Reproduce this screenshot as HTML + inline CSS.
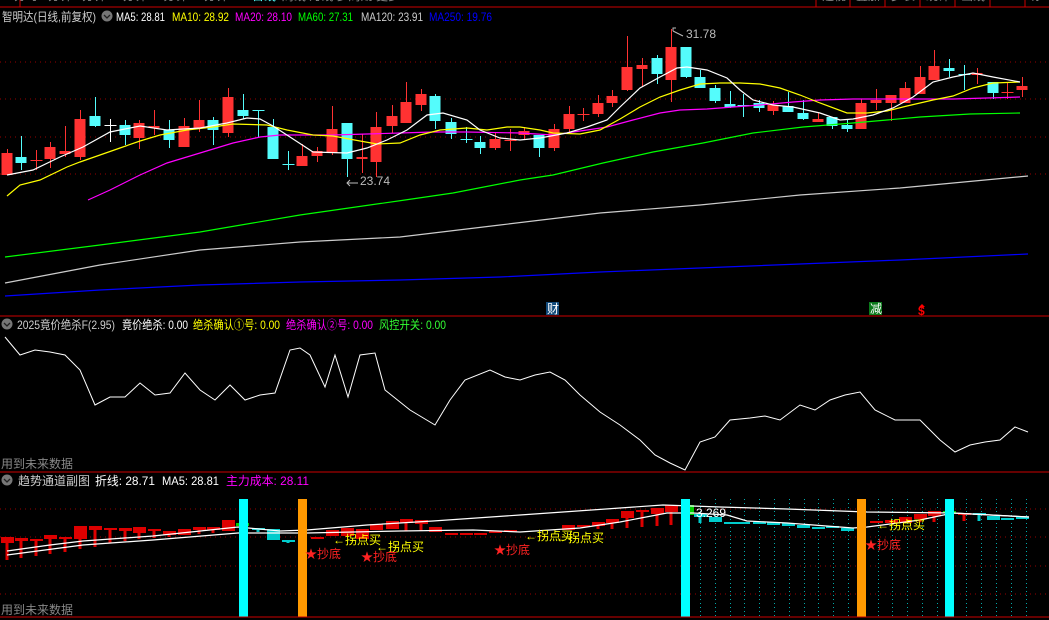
<!DOCTYPE html>
<html><head><meta charset="utf-8"><style>
html,body{margin:0;padding:0;background:#000;width:1049px;height:620px;overflow:hidden}
svg{display:block}
text{font-family:"Liberation Sans","Noto Sans CJK SC",sans-serif;font-size:12px}
</style></head><body>
<svg id="s" width="1049" height="620" viewBox="0 0 1049 620" xmlns="http://www.w3.org/2000/svg">
<rect width="1049" height="620" fill="#000"/>
<!-- top tab strip -->
<g fill="#888"><text x="14" y="0" font-size="12">分时 1分钟 5分钟 15分钟 30分钟 60分钟</text><text x="252" y="0" fill="#5ff">日线</text><text x="282" y="0">周线 月线 多周期 更多</text>
<text x="822" y="0">透视</text><text x="856" y="0">叠加</text><text x="891" y="0">步长</text><text x="926" y="0">统计</text><text x="961" y="0">画线</text><text x="1030" y="0">标</text></g>
<line x1="0" y1="7" x2="1049" y2="7" stroke="#c00" stroke-width="1"/>
<line x1="20" y1="0" x2="20" y2="7" stroke="#c00"/>
<g stroke="#c00"><line x1="816" y1="0" x2="816" y2="7"/><line x1="850" y1="0" x2="850" y2="7"/><line x1="885" y1="0" x2="885" y2="7"/><line x1="920" y1="0" x2="920" y2="7"/><line x1="955" y1="0" x2="955" y2="7"/><line x1="990" y1="0" x2="990" y2="7"/><line x1="1025" y1="0" x2="1025" y2="7"/></g>
<!-- main header -->
<text x="2" y="21" fill="#ccc" font-size="13" textLength="94" lengthAdjust="spacingAndGlyphs">智明达(日线,前复权)</text>
<circle cx="107" cy="16" r="5.5" fill="#777"/><path d="M104 15l3 3 3-3" stroke="#222" fill="none" stroke-width="1.3"/>
<text x="116" y="21" fill="#fff" textLength="49" lengthAdjust="spacingAndGlyphs">MA5: 28.81</text>
<text x="172" y="21" fill="#ff0" textLength="57" lengthAdjust="spacingAndGlyphs">MA10: 28.92</text>
<text x="235" y="21" fill="#f0f" textLength="57" lengthAdjust="spacingAndGlyphs">MA20: 28.10</text>
<text x="298" y="21" fill="#0f0" textLength="55" lengthAdjust="spacingAndGlyphs">MA60: 27.31</text>
<text x="361" y="21" fill="#ccc" textLength="62" lengthAdjust="spacingAndGlyphs">MA120: 23.91</text>
<text x="429" y="21" fill="#00f" textLength="63" lengthAdjust="spacingAndGlyphs">MA250: 19.76</text>
<!-- grids -->
<g stroke="#900" stroke-dasharray="1 4" stroke-width="1">
<line x1="0" y1="62" x2="1049" y2="62"/><line x1="0" y1="99" x2="1049" y2="99"/><line x1="0" y1="137" x2="1049" y2="137"/><line x1="0" y1="174" x2="1049" y2="174"/>
<line x1="0" y1="509" x2="1049" y2="509"/><line x1="0" y1="537" x2="1049" y2="537"/><line x1="0" y1="566" x2="1049" y2="566"/><line x1="0" y1="594" x2="1049" y2="594"/>
</g>
<g id="cand"></g>
<g fill="none" stroke-width="1.2">
<polyline stroke="#00f" points="5,296 100,290 200,285 300,282 400,280 500,277 600,272 700,268 800,264 900,260 1028,254"/>
<polyline stroke="#ccc" points="5,283 100,265 200,250 300,242 400,237 500,225 600,213 700,205 800,195 900,188 1028,176"/>
<polyline stroke="#0f0" points="5,257 100,245 200,232 300,215 405,200 453,193 520,180 553,175 603,163 653,152 703,143 753,133 803,127 853,123 887,120 920,117 970,114 1020,113"/>
<polyline stroke="#f0f" points="88,200 110,190 140,175 167,163 200,153 233,143 260,137 280,135 333,135 367,134 400,133 433,132 467,132 520,133 553,135 587,130 607,127 633,120 660,113 680,110 707,109 733,107 760,105 793,102 820,100 853,99 953,99 1020,97"/>
<polyline stroke="#ff0" points="7,196 20,185 40,180 67,167 80,162 100,155 120,148 140,141 160,135 187,130 213,127 233,124 267,125 287,130 313,135 333,136 360,141 377,144 400,143 420,135 440,130 467,128 487,130 507,127 520,127 540,130 553,133 580,134 600,130 620,119 640,107 660,97 680,90 700,84 720,83 740,83 760,84 780,88 800,95 820,103 847,113 867,113 887,111 907,106 933,100 953,96 973,88 993,83 1020,82"/>
<polyline stroke="#fff" points="7,175 33,170 60,157 83,147 110,132 140,126 167,130 200,128 227,123 247,118 260,119 273,126 290,137 313,152 347,153 367,148 387,140 407,130 427,115 443,113 467,120 480,130 500,138 520,140 540,138 567,133 587,127 607,120 620,107 640,88 660,77 677,68 687,67 707,70 727,78 740,90 753,100 773,105 793,107 820,113 840,120 853,119 873,115 893,108 913,97 933,82 953,77 973,73 993,77 1020,82"/>
</g>
<!-- labels -->
<g fill="#bbb" font-size="12"><text x="686" y="38">31.78</text><text x="360" y="185">23.74</text></g>
<path d="M673 31v-3h3M673 31l10 5" stroke="#bbb" fill="none"/>
<path d="M347 183h11M350 180l-3 3 3 3" stroke="#bbb" fill="none"/>
<rect x="546" y="302" width="13" height="13" fill="#124a7a"/><text x="547" y="313" fill="#fff" font-size="11">财</text>
<rect x="869" y="302" width="13" height="13" fill="#0a7a1a"/><text x="870" y="313" fill="#fff" font-size="11">减</text>
<text x="918" y="315" fill="#f00" font-size="11" font-weight="bold">$</text><path d="M919 307l3-3 3 3z" fill="#f00"/>
<line x1="0" y1="316" x2="1049" y2="316" stroke="#c00"/>
<!-- middle panel -->
<circle cx="7" cy="324" r="5.5" fill="#777"/><path d="M4 323l3 3 3-3" stroke="#222" fill="none" stroke-width="1.3"/>
<text x="17" y="329" fill="#ccc" textLength="98" lengthAdjust="spacingAndGlyphs">2025竟价绝杀F(2.95)</text>
<text x="122" y="329" fill="#fff" textLength="66" lengthAdjust="spacingAndGlyphs">竟价绝杀: 0.00</text>
<text x="193" y="329" fill="#ff0" textLength="87" lengthAdjust="spacingAndGlyphs">绝杀确认①号: 0.00</text>
<text x="286" y="329" fill="#f0f" textLength="87" lengthAdjust="spacingAndGlyphs">绝杀确认②号: 0.00</text>
<text x="379" y="329" fill="#3f3" textLength="67" lengthAdjust="spacingAndGlyphs">风控开关: 0.00</text>
<polyline fill="none" stroke="#fff" stroke-width="1" points="5,337 20,355 35,350 50,352 65,355 80,370 95,405 110,397 125,397 140,383 155,395 170,393 185,373 200,390 215,400 230,385 245,400 260,395 275,393 290,350 300,348 310,355 325,387 335,355 348,397 360,355 375,353 385,390 410,410 435,425 450,400 465,380 490,370 505,377 520,380 535,375 550,372 565,380 580,395 600,412 620,425 640,440 655,455 670,463 685,470 700,442 715,437 730,420 750,418 765,416 780,420 800,405 815,410 830,400 845,395 860,392 875,410 895,420 920,420 940,440 955,452 970,445 985,442 1000,440 1015,427 1028,432"/>
<text x="1" y="468" fill="#888">用到未来数据</text>
<line x1="0" y1="472" x2="1049" y2="472" stroke="#c00"/>
<!-- bottom panel -->
<circle cx="7" cy="480" r="5.5" fill="#777"/><path d="M4 479l3 3 3-3" stroke="#222" fill="none" stroke-width="1.3"/>
<text x="18" y="485" fill="#ccc" textLength="72" lengthAdjust="spacingAndGlyphs">趋势通道副图</text>
<text x="95" y="485" fill="#fff" textLength="60" lengthAdjust="spacingAndGlyphs">折线: 28.71</text>
<text x="162" y="485" fill="#fff" textLength="57" lengthAdjust="spacingAndGlyphs">MA5: 28.81</text>
<text x="226" y="485" fill="#f0f" textLength="83" lengthAdjust="spacingAndGlyphs">主力成本: 28.11</text>
<g id="vdots" stroke="#0aa" stroke-dasharray="1 3"></g>
<g id="bot"></g>
<g fill="none" stroke="#fff" stroke-width="1.2">
<polyline points="7,551 50,545 83,541 153,536 238,527 280,531 307,530 367,525 433,521 520,515 563,512 620,508 663,505 720,507 787,509 867,512 953,513 1029,517"/>
<polyline points="7,555 83,545 153,540 238,533 290,533 307,533 400,531 473,530 520,532 580,528 620,522 667,513 693,513 727,515 747,521 787,523 853,528 867,527 920,520 953,513 1029,517"/>
</g>
<rect x="239" y="499" width="9" height="118" fill="#0ff"/>
<rect x="298" y="499" width="9" height="118" fill="#f90"/>
<rect x="681" y="499" width="9" height="118" fill="#0ff"/>
<rect x="857" y="499" width="9" height="118" fill="#f90"/>
<rect x="945" y="499" width="9" height="118" fill="#0ff"/>
<text x="696" y="517" fill="#fff" font-size="11">3.269</text>
<g fill="#ff0" font-size="12"><text x="333" y="544">←拐点买</text><text x="376" y="551">←拐点买</text><text x="525" y="540">←拐点买</text><text x="556" y="542">←拐点买</text><text x="877" y="529">←拐点买</text></g>
<g fill="#f22" font-size="12"><text x="305" y="558">★抄底</text><text x="361" y="561">★抄底</text><text x="494" y="554">★抄底</text><text x="865" y="549">★抄底</text></g>
<text x="1" y="614" fill="#888">用到未来数据</text>
<line x1="0" y1="617" x2="1049" y2="617" stroke="#c00"/>
</svg>
<script>
var NS="http://www.w3.org/2000/svg";
function el(p,t,a){var e=document.createElementNS(NS,t);for(var k in a)e.setAttribute(k,a[k]);p.appendChild(e);return e;}
var C={r:"#ff3232",c:"#54fcfc",w:"#ffffff"};
var d=[[7,153,175,149,175,'r'],[21,157,163,136,170,'c'],[36,160,161,150,170,'r'],[50,147,159,142,168,'r'],[65,151,154,126,157,'r'],[80,119,157,110,160,'r'],[95,116,126,97,127,'c'],[110,125,126,119,142,'w'],[125,125,135,120,145,'c'],[139,123,138,120,149,'r'],[154,126,128,110,135,'r'],[169,130,140,120,148,'c'],[184,126,147,118,147,'r'],[199,120,128,100,132,'r'],[213,120,130,117,145,'c'],[228,97,133,88,137,'r'],[243,110,116,94,119,'c'],[258,110,111,110,137,'c'],[273,127,159,119,159,'c'],[288,164,165,151,170,'c'],[302,156,166,144,166,'r'],[317,151,156,147,162,'r'],[332,129,153,106,155,'r'],[347,123,159,123,177,'c'],[362,157,159,134,173,'r'],[376,127,162,112,177,'r'],[392,116,126,105,133,'r'],[406,102,123,82,123,'r'],[421,94,105,89,111,'r'],[435,96,121,94,129,'c'],[451,122,134,118,139,'c'],[466,139,140,127,143,'c'],[480,142,148,136,154,'c'],[495,139,148,132,150,'r'],[510,140,141,129,151,'r'],
[524,131,135,127,139,'r'],[539,135,148,135,157,'c'],[554,129,148,124,151,'r'],[569,114,129,106,132,'r'],[583,114,115,108,121,'r'],[598,103,114,95,117,'r'],[612,96,103,90,107,'r'],[627,67,90,36,91,'r'],[642,65,69,58,87,'r'],[657,58,74,55,84,'c'],[671,47,80,29,102,'r'],[686,47,77,47,78,'c'],[700,77,88,70,88,'c'],[715,88,101,85,103,'c'],[730,104,107,91,108,'c'],[743,105,106,94,117,'c'],[759,103,108,100,112,'c'],[773,105,111,101,115,'r'],[788,106,112,92,112,'c'],[803,113,119,100,120,'c'],[818,119,122,113,122,'r'],[832,117,126,117,129,'c'],[847,125,129,120,132,'c'],[861,103,129,99,129,'r'],[876,100,103,89,110,'r'],[891,95,103,95,121,'r'],[905,88,103,82,103,'r'],[920,77,94,66,94,'r'],[934,66,80,50,80,'r'],[949,68,71,59,77,'c'],[964,74,75,65,90,'c'],[977,73,75,68,84,'r'],[993,82,93,82,99,'c'],[1007,92,93,83,99,'r'],[1022,86,90,77,97,'r']];
var g=document.getElementById("cand");
d.forEach(function(c){var col=C[c[5]];el(g,"line",{x1:c[0]+.5,x2:c[0]+.5,y1:c[3],y2:c[4],stroke:col});var h=Math.max(1,c[2]-c[1]);var w=c[2]-c[1]<=1?12:11;el(g,"rect",{x:c[0]-5.5,y:c[1],width:w,height:h,fill:col});});
var b=[[7,537,543,560,'r'],[21,538,541,558,'r'],[36,539,540,556,'r'],[50,535,539,554,'r'],[65,537,538,552,'r'],[80,526,539,549,'r'],[95,526,530,547,'r'],[110,528,529,543,'r'],[125,528,531,541,'r'],[139,527,533,539,'r'],[154,529,530,538,'r'],[169,531,535,537,'r'],[184,529,535,535,'r'],[199,527,530,534,'r'],[213,527,530,533,'r'],[228,520,531,531,'r'],[258,528,529,532,'c'],[273,529,540,540,'c'],[288,540,541,543,'c'],[317,537,538,538,'r'],[332,530,536,536,'r'],[347,528,536,536,'r'],[362,529,539,539,'r'],[376,524,530,530,'r'],[392,521,529,529,'r'],[406,519,523,531,'r'],[421,520,524,531,'r'],[435,527,532,532,'r'],[451,533,534,534,'r'],[466,533,535,535,'r'],[480,533,535,535,'r'],[495,531,533,533,'r'],[510,530,532,532,'r'],[568,525,530,530,'r'],[583,525,527,528,'r'],[598,522,526,529,'r'],[612,519,523,529,'r'],[627,511,518,528,'r'],[642,510,512,527,'r'],[657,508,514,526,'r'],[671,505,512,525,'r'],[700,514,517,523,'c'],[715,517,522,522,'c'],[730,522,523,523,'c'],[743,522,523,523,'c'],[759,522,524,524,'c'],[773,522,525,525,'c'],[788,523,526,526,'c'],[803,525,528,528,'c'],[818,527,528,528,'c'],[832,526,528,528,'c'],[847,528,531,531,'c'],[876,521,523,523,'r'],[891,520,523,523,'r'],[905,517,523,523,'r'],[920,514,519,522,'r'],[934,511,516,522,'r'],[964,513,515,521,'r'],[979,513,515,521,'c'],[993,516,520,520,'c'],[1007,518,520,520,'c'],[1022,517,519,519,'c']];
var bg=document.getElementById("bot");
b.forEach(function(c){var col=c[4]=='r'?"#d00":"#0cc";if(c[3]>c[2])el(bg,"rect",{x:c[0]-1.5,y:c[2],width:3,height:c[3]-c[2],fill:col});el(bg,"rect",{x:c[0]-6,y:c[1],width:13,height:Math.max(2,c[2]-c[1]),fill:col});});
el(bg,"rect",{x:236,y:523,width:13,height:3,fill:"#0c0"});el(bg,"rect",{x:681,y:505,width:13,height:10,fill:"#0c0"});el(bg,"rect",{x:943,y:511,width:13,height:2,fill:"#0c0"});
var vg=document.getElementById("vdots");
for(var x=700;x<1030;x+=14.8){el(vg,"line",{x1:Math.round(x)+.5,x2:Math.round(x)+.5,y1:499,y2:617});}
</script>
</body></html>
